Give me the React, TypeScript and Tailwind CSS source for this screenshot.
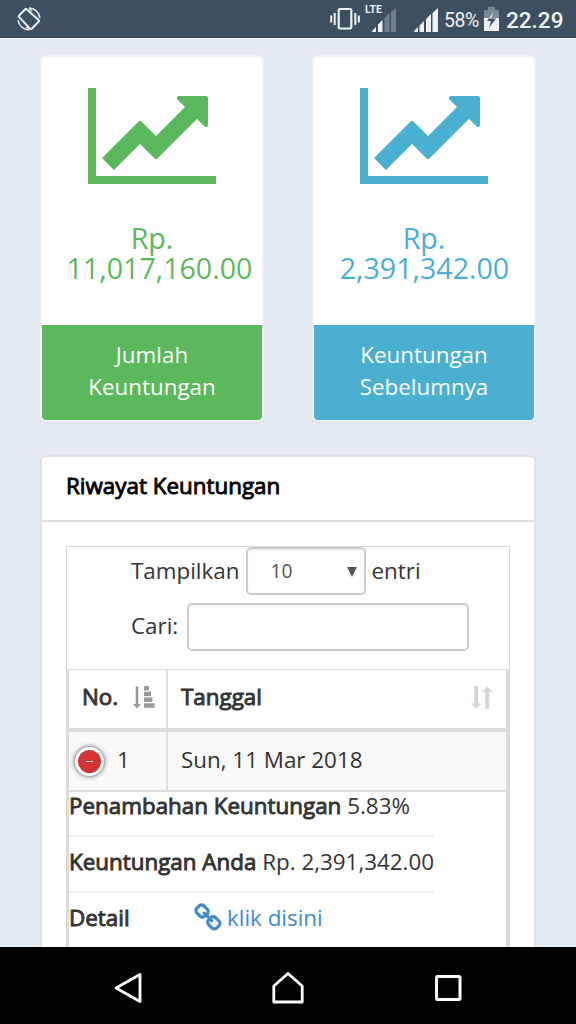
import clsx from "clsx"

const CHART =
  "M2048 1536v128h-2048v-1536h128v1408h1920zM1920 288v435q0 21-19.5 29.5t-35.5-7.5l-121-121-633 633q-10 10-23 10t-23-10l-233-233-416 416-192-192 585-585q10-10 23-10t23 10l233 233 464-464-121-121q-16-16-7.5-35.5t29.5-19.5h435q14 0 23 9t9 23z"

const LINK =
  "M1456 1216q0-40-28-68l-208-208q-28-28-68-28-42 0-72 32 3 3 19 18.5t21.5 21.5 15 19 13 25.5 3.5 27.5q0 40-28 68t-68 28q-15 0-27.5-3.5t-25.5-13-19-15-21.5-21.5-18.5-19q-33 31-33 73 0 40 28 68l206 207q27 27 68 27 40 0 68-26l147-146q28-28 28-67zm-703-705q0-40-28-68l-206-207q-28-28-68-28-39 0-68 27l-147 146q-28 28-28 67 0 40 28 68l208 208q27 27 68 27 42 0 72-31-3-3-19-18.5t-21.5-21.5-15-19-13-25.5-3.5-27.5q0-40 28-68t68-28q15 0 27.5 3.5t25.5 13 19 15 21.5 21.5 18.5 19q33-31 33-73zm895 705q0 120-85 203l-147 146q-83 83-203 83-121 0-204-85l-206-207q-83-83-83-203 0-123 88-209l-88-88q-86 88-208 88-120 0-204-84l-208-208q-84-84-84-204t85-203l147-146q83-83 203-83 121 0 204 85l206 207q83 83 83 203 0 123-88 209l88 88q86-88 208-88 120 0 204 84l208 208q84 84 84 204z"

function StatusBar() {
  return (
    <header className="flex h-[38px] shrink-0 items-center border-b border-[#2f4152] bg-[#3e505f] font-['Roboto',sans-serif] text-[#eef1f3]">
      <svg className="ml-[17px] mt-px h-6 w-6" viewBox="0 0 24 24" fill="none" stroke="currentColor">
        <path d="M8.2 2.2 2 8.6a1 1 0 0 0 0 1.3l11.2 12a1 1 0 0 0 1.3 0l7.3-7.4a1 1 0 0 0 0-1.3L9.6 2.2a1 1 0 0 0-1.4 0z" strokeWidth="2" />
        <path d="M12 1.100A11 11 0 0 1 22.900 11M1.100 13A11 11 0 0 0 12 22.900" strokeWidth="1.5" />
        <path d="m12 1.500 3 2.500M12 22.500l-3-2.500" strokeWidth="1.2" />
      </svg>
      <svg className="ml-[289px] h-6 w-[30px]" viewBox="0 0 30 24" fill="none" stroke="currentColor">
        <rect x="8.7" y="2" width="12.6" height="19.5" rx="1.2" strokeWidth="2.2" />
        <path d="M1.200 8.500v7M4.700 6v12M25.300 6v12M28.800 8.500v7" strokeWidth="2" />
      </svg>
      <div className="ml-[4px] h-full w-[34px]">
        <div className="pl-px pt-1 text-[10.5px] font-bold leading-3">LTE</div>
        <svg className="ml-[8px] mt-[-8px] h-6 w-6" viewBox="0 0 24 24" fill="currentColor">
          <path d="M0 24v-1l4-4v5zM6 24v-7.5l4.5-4.5v12z" />
          <path d="M12.5 24V10l5-5v19zM19 24V4l5-4v24z" opacity=".3" />
        </svg>
      </div>
      <svg className="ml-[16px] mt-[3px] h-6 w-6" viewBox="0 0 24 24" fill="currentColor">
        <path d="M0 24v-1l4-4v5zM5.5 24v-6.5L10 13v11zM12 24V11l5-5v18zM18.5 24V5l5.5-5v24z" />
      </svg>
      <span className="ml-[6px] mt-[4px] text-[19.5px] tracking-[-0.4px]">58%</span>
      <svg className="ml-[5px] mt-px h-6 w-[15px]" viewBox="0 0 15 24">
        <path d="M4 0h7v3h4v8H0V3h4z" fill="#7d8993" />
        <path d="M0 11h15v13H0z" fill="currentColor" />
        <path d="M9.5 5 3 14h4l-2 7 7-9.5H7.5z" fill="#3e505f" />
        <path d="M9.500 5 4.800 11.500h2.700z" fill="#eef1f3" />
      </svg>
      <span className="ml-[7px] mt-[4px] text-[22.5px] font-medium">22.29</span>
    </header>
  )
}

function StatCard({ amount, label, blue }: { amount: string; label: string[]; blue?: boolean }) {
  return (
    <div className="flex h-[367px] w-[224px] flex-col overflow-hidden rounded-md border-2 border-[#f1f2f3] bg-white text-center shadow-[0_1px_2px_rgba(0,0,0,0.06)]">
      <div className={clsx("flex flex-1 flex-col items-center pt-[31px]", blue ? "text-[#4bafd0]" : "text-[#5cb85c]")}>
        <svg className="h-24 w-32" viewBox="0 128 2048 1536" fill="currentColor">
          <path d={CHART} />
        </svg>
        <div className="mt-[39px] whitespace-nowrap text-[28.6px] leading-[30px]">
          <div>Rp.</div>
          <div className={clsx(!blue && "-mr-[15px]", blue && "-mr-px")}>{amount}</div>
        </div>
      </div>
      <div className={clsx("h-[95px] pt-[14px] text-[22.4px] leading-8 text-white", blue ? "bg-[#4bafd0]" : "bg-[#5cb85c]")}>
        {label[0]}
        <br />
        {label[1]}
      </div>
    </div>
  )
}

function DetailTable() {
  return (
    <div className="w-[365px]">
      <div className="h-[45px] whitespace-nowrap border-b-2 border-[#efefef] leading-7">
        <b className="font-normal [-webkit-text-stroke:0.9px_#333]">Penambahan Keuntungan</b> 5.83%
      </div>
      <div className="h-[56px] whitespace-nowrap border-b-2 border-[#efefef] pt-[9px] leading-8">
        <b className="font-normal [-webkit-text-stroke:0.9px_#333]">Keuntungan Anda</b> Rp. 2,391,342.00
      </div>
      <div className="flex h-[54px] pt-[9px] leading-8">
        <b className="w-[125px] font-normal [-webkit-text-stroke:0.9px_#333]">Detail</b>
        <svg className="mt-px h-[30px] w-[30px] shrink-0" viewBox="0 0 1792 1792" fill="#428bca">
          <path d={LINK} />
        </svg>
        <a className="ml-[3px] text-[#428bca]">klik disini</a>
      </div>
    </div>
  )
}

function HistoryPanel() {
  return (
    <section className="mx-10 mt-[33px] flex min-h-0 flex-1 flex-col overflow-hidden rounded-t-md border-2 border-b-0 border-[#e0e1e3] bg-white">
      <h2 className="h-[65px] shrink-0 border-b-2 border-[#dedede] pl-6 pt-[13px] text-[22.4px] leading-8 text-black [-webkit-text-stroke:0.9px_#000]">
        Riwayat Keuntungan
      </h2>
      <div className="mx-6 mt-6 flex-1 border border-b-0 border-[#d8d8d8]">
        <div className="flex items-center pl-[64px]">
          <span>Tampilkan</span>
          <div className="ml-[7px] flex h-12 w-[120px] items-center justify-between rounded-[5px] border-2 border-[#ccc] pl-[22px] pr-[7px] pt-px text-[19.2px] text-[#555] shadow-[inset_0_2px_2px_rgba(0,0,0,0.06)]">
            10
            <svg className="h-[10px] w-[10px]" viewBox="0 0 10 10" fill="#555">
              <path d="M0 0h10L5 10z" />
            </svg>
          </div>
          <span className="ml-[5px]">entri</span>
        </div>
        <div className="mt-2 flex items-center pl-[64px]">
          <span className="mt-[-3px]">Cari:</span>
          <div className="ml-[9px] h-12 w-[282px] rounded-[5px] border-2 border-[#ccc] shadow-[inset_0_2px_2px_rgba(0,0,0,0.06)]" />
        </div>
        {/* table */}
        <div className="mt-[18px] h-[280px] border-l-2 border-r-[3px] border-t border-[#dcdcdc]">
          <div className="flex h-[62px] border-b-4 border-[#dcdcdc]">
            <div className="flex w-[99px] justify-between border-r-2 border-[#dedede] pl-[13px] pr-[11px] pt-[11px] leading-8">
              <span className="[-webkit-text-stroke:0.9px_#333]">No.</span>
              <svg className="mt-[5px] h-6 w-[22px]" viewBox="0 0 22 24" fill="#999">
                <path d="M2.700.500h2.600V18H8l-4 4.500L0 18h2.700zM11 0h5v4.500h-5zM11 5.800h7v4.400h-7zM11 11.500h8.500v4.400H11zM11 17.300h10.700v4.400H11z" />
              </svg>
            </div>
            <div className="flex flex-1 justify-between pl-[13px] pr-[13px] pt-[11px] leading-8">
              <span className="[-webkit-text-stroke:0.9px_#333]">Tanggal</span>
              <svg className="mt-[5px] h-6 w-[22px]" viewBox="0 0 22 24" fill="#d5d5d5">
                <path d="M3.200 0h4v17.500h3.300L5.200 22.800 0 17.500h3.200zM14.300 22.800h4V6H21.700L16.300.700 11 6h3.300z" />
              </svg>
            </div>
          </div>
          <div className="flex h-[60px] border-b-2 border-[#dcdcdc] bg-[#f9f9f9] leading-8">
            <div className="flex w-[99px] items-center border-r-2 border-[#dedede] pl-[6px]">
              <span className="flex h-[29px] w-[29px] items-center justify-center rounded-full border-[3px] border-white bg-[#d33333] shadow-[0_0_5px_#444]">
                <span className="h-px w-[7px] bg-white/80" />
              </span>
              <span className="ml-[13px] mt-[-3px]">1</span>
            </div>
            <span className="pl-[13px] pt-3">Sun, 11 Mar 2018</span>
          </div>
          <DetailTable />
        </div>
      </div>
    </section>
  )
}

export default function App() {
  return (
    <div className="flex h-[1024px] w-[576px] flex-col overflow-hidden bg-[#e4eaf2] font-['Open_Sans',sans-serif] text-[22.4px] text-[#333]">
      <StatusBar />
      <div className="h-px shrink-0 bg-[#f4f6f9]" />
      <div className="mx-10 mt-4 flex shrink-0 justify-between">
        <StatCard amount="11,017,160.00" label={["Jumlah", "Keuntungan"]} />
        <StatCard amount="2,391,342.00" label={["Keuntungan", "Sebelumnya"]} blue />
      </div>
      <HistoryPanel />
      <nav className="flex h-[77px] shrink-0 items-center justify-between bg-black px-[113px] pt-[5px]">
        <svg className="h-[32px] w-[30px]" viewBox="0 0 30 32" fill="none" stroke="white" strokeWidth="2.8" strokeLinejoin="round">
          <path d="M27 2.500v27L3 16z" />
        </svg>
        <svg className="h-[32px] w-[32px]" viewBox="0 0 32 32" fill="none" stroke="white" strokeWidth="2.8" strokeLinejoin="round">
          <path d="M16 1.500 30.200 14v16H1.800V14z" />
        </svg>
        <svg className="h-[26px] w-[30px]" viewBox="0 0 30 26" fill="none" stroke="white" strokeWidth="3">
          <rect x="3.500" y="1.500" width="23.500" height="23" rx="1" />
        </svg>
      </nav>
    </div>
  )
}
